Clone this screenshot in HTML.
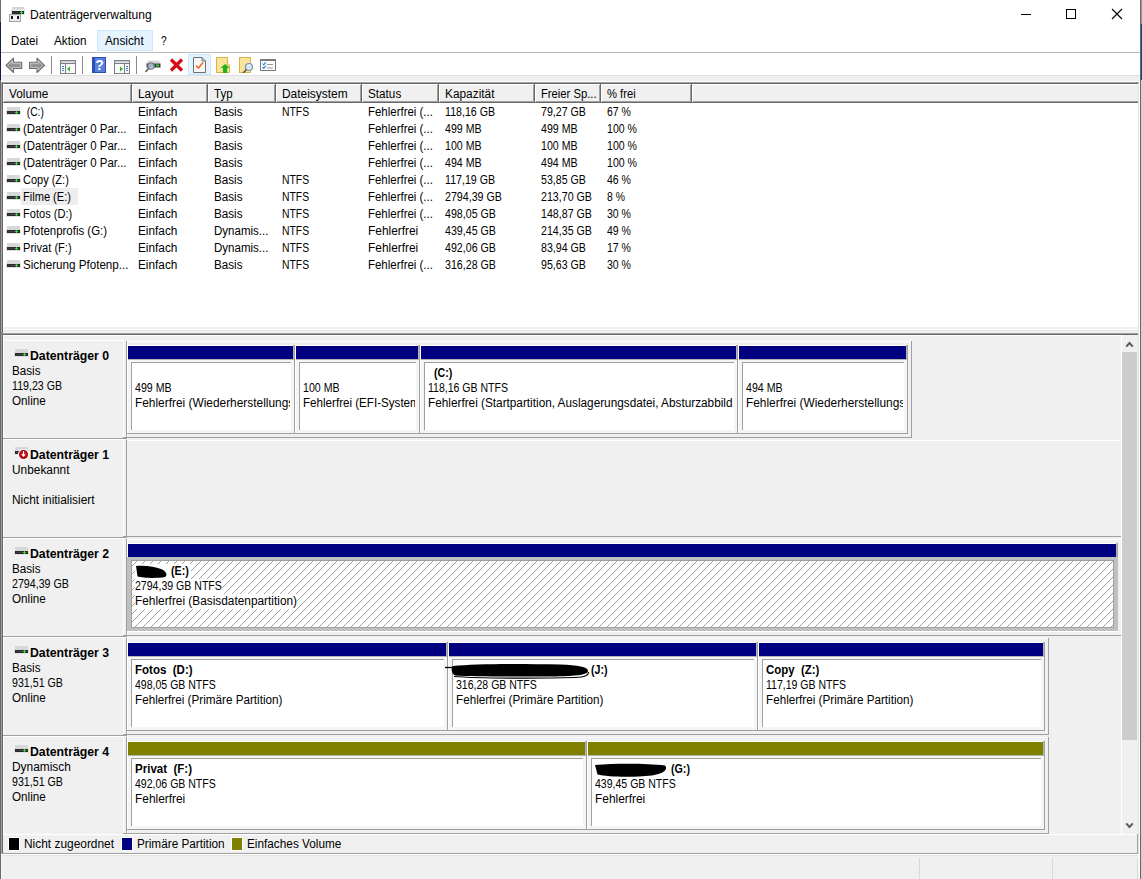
<!DOCTYPE html><html><head><meta charset="utf-8"><style>
html,body{margin:0;padding:0;width:1142px;height:879px;overflow:hidden;background:#fff}
body{position:relative;font-family:"Liberation Sans",sans-serif;font-size:12px}
div{position:absolute;box-sizing:border-box}
.t{white-space:pre;color:#000;font-size:12px}
svg{position:absolute}
</style></head><body>
<div style="left:0px;top:0px;width:1142px;height:879px;background:#ffffff;"></div>
<div style="left:0px;top:0px;width:1px;height:22px;background:#6a6a6a;"></div>
<div style="left:0px;top:22px;width:1px;height:58px;background:#13213f;"></div>
<div style="left:0px;top:80px;width:1px;height:799px;background:#696969;"></div>
<div style="left:1141px;top:0px;width:1px;height:24px;background:#9a9a9a;"></div>
<div style="left:1141px;top:24px;width:1px;height:56px;background:#1d3f73;"></div>
<div style="left:1141px;top:80px;width:1px;height:799px;background:#cfcfcf;"></div>
<div style="left:1140px;top:0px;width:1px;height:879px;background:#696969;"></div>
<svg style="position:absolute;left:9px;top:6px" width="17" height="17" viewBox="0 0 17 17" shape-rendering="crispEdges">
<rect x="3" y="1" width="12" height="4" fill="#d3d5d8"/><rect x="2" y="3" width="14" height="6" fill="#e3e5e7"/><rect x="3" y="5" width="12" height="3" fill="#262626"/><rect x="4" y="6" width="6" height="1" fill="#3a3a3a"/>
<rect x="11" y="6" width="3" height="1" fill="#35e035"/><rect x="12" y="5" width="1" height="3" fill="#35e035"/>
<rect x="0" y="8" width="12" height="8" fill="#a4a4a4"/><rect x="1" y="9" width="10" height="6" fill="#e8e8e8"/><rect x="4" y="10" width="4" height="4" fill="#f6f6f6"/>
<rect x="2" y="10" width="2" height="3" fill="#1c1c1c"/><rect x="8" y="10" width="2" height="3" fill="#1c1c1c"/></svg>
<div class="t" style="left:30px;top:8px;line-height:15px;color:#000;"><span style="display:inline-block;transform:scaleX(1.0024);transform-origin:0 0">Datenträgerverwaltung</span></div>
<div style="left:1021px;top:14px;width:10px;height:1px;background:#000;"></div>
<div style="left:1066px;top:9px;width:10px;height:10px;background:transparent;border:1px solid #000;box-sizing:border-box;"></div>
<svg style="position:absolute;left:1111px;top:8px" width="12" height="12" viewBox="0 0 12 12"><path d="M1 1L11 11M11 1L1 11" stroke="#000" stroke-width="1.1"/></svg>
<div style="left:97px;top:30px;width:56px;height:21px;background:#e5f3ff;border:1px solid #cce8ff;box-sizing:border-box;"></div>
<div class="t" style="left:11px;top:34px;line-height:15px;color:#000;"><span style="display:inline-block;transform:scaleX(0.9669);transform-origin:0 0">Datei</span></div>
<div class="t" style="left:54px;top:34px;line-height:15px;color:#000;"><span style="display:inline-block;transform:scaleX(0.9772);transform-origin:0 0">Aktion</span></div>
<div class="t" style="left:105px;top:34px;line-height:15px;color:#000;"><span style="display:inline-block;transform:scaleX(0.9827);transform-origin:0 0">Ansicht</span></div>
<div class="t" style="left:161px;top:34px;line-height:15px;color:#000;"><span style="display:inline-block;transform:scaleX(0.8440);transform-origin:0 0">?</span></div>
<div style="left:1px;top:52px;width:1139px;height:1px;background:#b9b9b9;"></div>
<div style="left:51px;top:56px;width:1px;height:18px;background:#8c8c8c;"></div>
<div style="left:82px;top:56px;width:1px;height:18px;background:#8c8c8c;"></div>
<div style="left:136px;top:56px;width:1px;height:18px;background:#8c8c8c;"></div>
<svg style="position:absolute;left:5px;top:57px" width="42" height="17" viewBox="0 0 42 17"><defs><linearGradient id="ag" x1="0" y1="0" x2="0" y2="1"><stop offset="0" stop-color="#c4c4c4"/><stop offset="0.55" stop-color="#8c8c8c"/><stop offset="1" stop-color="#bcbcbc"/></linearGradient></defs><g stroke="#6b6b6b" stroke-width="1.1" stroke-linejoin="round" fill="url(#ag)"><path d="M1 8.3L8.5 1.2V5.2H16.7V11.5H8.5V15.5z"/><path d="M39.5 8.3L32 1.2V5.2H24.6V11.5H32V15.5z"/></g><g stroke="#e6e6e6" stroke-width="0.7" fill="none" opacity="0.8"><path d="M2.6 8.3L7.4 3.6V6.3H15.6V10.4H7.4V13.1z"/><path d="M37.9 8.3L33.1 3.6V6.3H25.7V10.4H33.1V13.1z"/></g></svg>
<svg style="position:absolute;left:60px;top:60px" width="16" height="14" viewBox="0 0 16 14"><rect x="0.5" y="0.5" width="15" height="13" fill="#fafafa" stroke="#7a7f86"/><rect x="1" y="1" width="14" height="1.5" fill="#c9ccd1"/><rect x="1" y="3" width="14" height="1" fill="#7a7f86"/><rect x="5" y="4" width="1" height="10" fill="#7a7f86"/><rect x="2" y="6" width="2" height="1" fill="#3a7bd5"/><rect x="2" y="8" width="2" height="1" fill="#3a7bd5"/><rect x="2" y="10" width="2" height="1" fill="#3a7bd5"/><path d="M7 9L10 6.5V11.5z" fill="#2db52d"/></svg>
<svg style="position:absolute;left:92px;top:57px" width="14" height="16" viewBox="0 0 14 16"><rect x="0" y="0" width="14" height="16" fill="#2b4fb8"/><rect x="3" y="1" width="10" height="14" fill="#5b7fdc"/><text x="7.5" y="13" font-family="Liberation Sans" font-weight="bold" font-size="14" fill="#fff" text-anchor="middle">?</text></svg>
<svg style="position:absolute;left:114px;top:60px" width="16" height="14" viewBox="0 0 16 14"><rect x="0.5" y="0.5" width="15" height="13" fill="#fafafa" stroke="#7a7f86"/><rect x="1" y="1" width="14" height="1.5" fill="#c9ccd1"/><rect x="1" y="3" width="14" height="1" fill="#7a7f86"/><rect x="10" y="4" width="1" height="10" fill="#7a7f86"/><rect x="12" y="6" width="2" height="1" fill="#3a7bd5"/><rect x="12" y="8" width="2" height="1" fill="#3a7bd5"/><rect x="12" y="10" width="2" height="1" fill="#3a7bd5"/><path d="M9 9L6 6.5V11.5z" fill="#2db52d"/></svg>
<svg style="position:absolute;left:145px;top:60px" width="16" height="13" viewBox="0 0 16 13"><path d="M3 0.5h11l1.5 3H1.5z" fill="#d5d7d9"/><rect x="1.5" y="3.5" width="14" height="4" fill="#3a3a3a"/><rect x="11" y="4.5" width="3" height="2" fill="#2ecc2e"/><circle cx="6" cy="6" r="3.2" fill="#bcd6ea" fill-opacity="0.8" stroke="#6d7a86" stroke-width="1.2"/><path d="M3.7 8.3L0.5 12" stroke="#555" stroke-width="1.5"/></svg>
<svg style="position:absolute;left:169px;top:58px" width="15" height="14" viewBox="0 0 15 14"><path d="M2 1.5L13 12.5M13 1.5L2 12.5" stroke="#d40b13" stroke-width="3.2"/></svg>
<div style="left:188px;top:54px;width:23px;height:21px;background:#e5f3ff;border:1px solid #cce8ff;"></div>
<svg style="position:absolute;left:193px;top:57px" width="13" height="16" viewBox="0 0 13 16"><path d="M0.5 0.5H9L12.5 4V15.5H0.5z" fill="#f7f7f7" stroke="#6e6e6e"/><path d="M9 0.5V4H12.5" fill="none" stroke="#6e6e6e"/><path d="M3 8.5L5.5 11L10 5.5" stroke="#f06a27" stroke-width="1.6" fill="none"/></svg>
<svg style="position:absolute;left:216px;top:57px" width="14" height="16" viewBox="0 0 14 16"><rect x="0.5" y="0.5" width="11" height="15" fill="#fbe39a" stroke="#d9b54a"/><rect x="11" y="8" width="2.5" height="7.5" fill="#fbe39a" stroke="#d9b54a" stroke-width="1"/><path d="M9 7L13.5 11H11V16H7V11H4.5z" fill="#1fb21f"/></svg>
<svg style="position:absolute;left:239px;top:57px" width="15" height="16" viewBox="0 0 15 16"><rect x="0.5" y="0.5" width="11" height="15" fill="#fbe39a" stroke="#d9b54a"/><circle cx="10" cy="10" r="3.5" fill="#d6e8f5" stroke="#7f96ab" stroke-width="1.2"/><path d="M7.5 12.5L4 16" stroke="#555" stroke-width="1.6"/></svg>
<svg style="position:absolute;left:260px;top:59px" width="16" height="12" viewBox="0 0 16 12"><rect x="0.5" y="0.5" width="15" height="11" fill="#fafafa" stroke="#7a7a7a"/><rect x="1" y="1" width="14" height="1" fill="#7a7a7a"/><path d="M2.5 4.5l1.2 1.3 2-2.5M2.5 8l1.2 1.3 2-2.5" stroke="#2a7fd8" stroke-width="1.1" fill="none"/><rect x="7" y="5" width="6" height="1" fill="#9a9a9a"/><rect x="7" y="8.5" width="6" height="1" fill="#9a9a9a"/></svg>
<div style="left:1px;top:75px;width:1139px;height:1px;background:#e0e0e0;"></div>
<div style="left:1px;top:76px;width:1139px;height:5px;background:#f0f0f0;"></div>
<div style="left:1px;top:81px;width:1139px;height:1px;background:#ffffff;"></div>
<div style="left:1px;top:82px;width:1138px;height:1px;background:#a0a0a0;"></div>
<div style="left:1px;top:82px;width:1px;height:772px;background:#a0a0a0;"></div>
<div style="left:2px;top:83px;width:1136px;height:1px;background:#696969;"></div>
<div style="left:2px;top:83px;width:1px;height:771px;background:#696969;"></div>
<div style="left:1138px;top:83px;width:1px;height:771px;background:#e3e3e3;"></div>
<div style="left:3px;top:84px;width:1135px;height:243px;background:#ffffff;"></div>
<div style="left:3px;top:84px;width:1135px;height:19px;background:#f0f0f0;"></div>
<div style="left:3px;top:84px;width:1135px;height:1px;background:#ffffff;"></div>
<div style="left:3px;top:102px;width:1135px;height:1px;background:#696969;"></div>
<div style="left:3px;top:101px;width:1135px;height:1px;background:#a0a0a0;"></div>
<div style="left:3px;top:84px;width:1px;height:18px;background:#ffffff;"></div>
<div style="left:131px;top:84px;width:1px;height:19px;background:#696969;"></div>
<div style="left:130px;top:85px;width:1px;height:17px;background:#a0a0a0;"></div>
<div class="t" style="left:9px;top:87px;line-height:15px;color:#000;"><span style="display:inline-block;transform:scaleX(0.9837);transform-origin:0 0">Volume</span></div>
<div style="left:132px;top:84px;width:1px;height:18px;background:#ffffff;"></div>
<div style="left:207px;top:84px;width:1px;height:19px;background:#696969;"></div>
<div style="left:206px;top:85px;width:1px;height:17px;background:#a0a0a0;"></div>
<div class="t" style="left:138px;top:87px;line-height:15px;color:#000;"><span style="display:inline-block;transform:scaleX(0.9854);transform-origin:0 0">Layout</span></div>
<div style="left:208px;top:84px;width:1px;height:18px;background:#ffffff;"></div>
<div style="left:275px;top:84px;width:1px;height:19px;background:#696969;"></div>
<div style="left:274px;top:85px;width:1px;height:17px;background:#a0a0a0;"></div>
<div class="t" style="left:214px;top:87px;line-height:15px;color:#000;"><span style="display:inline-block;transform:scaleX(0.9584);transform-origin:0 0">Typ</span></div>
<div style="left:276px;top:84px;width:1px;height:18px;background:#ffffff;"></div>
<div style="left:361px;top:84px;width:1px;height:19px;background:#696969;"></div>
<div style="left:360px;top:85px;width:1px;height:17px;background:#a0a0a0;"></div>
<div class="t" style="left:282px;top:87px;line-height:15px;color:#000;"><span style="display:inline-block;transform:scaleX(0.9934);transform-origin:0 0">Dateisystem</span></div>
<div style="left:362px;top:84px;width:1px;height:18px;background:#ffffff;"></div>
<div style="left:438px;top:84px;width:1px;height:19px;background:#696969;"></div>
<div style="left:437px;top:85px;width:1px;height:17px;background:#a0a0a0;"></div>
<div class="t" style="left:368px;top:87px;line-height:15px;color:#000;"><span style="display:inline-block;transform:scaleX(0.9779);transform-origin:0 0">Status</span></div>
<div style="left:439px;top:84px;width:1px;height:18px;background:#ffffff;"></div>
<div style="left:534px;top:84px;width:1px;height:19px;background:#696969;"></div>
<div style="left:533px;top:85px;width:1px;height:17px;background:#a0a0a0;"></div>
<div class="t" style="left:445px;top:87px;line-height:15px;color:#000;"><span style="display:inline-block;transform:scaleX(0.9892);transform-origin:0 0">Kapazität</span></div>
<div style="left:535px;top:84px;width:1px;height:18px;background:#ffffff;"></div>
<div style="left:600px;top:84px;width:1px;height:19px;background:#696969;"></div>
<div style="left:599px;top:85px;width:1px;height:17px;background:#a0a0a0;"></div>
<div class="t" style="left:541px;top:87px;line-height:15px;color:#000;"><span style="display:inline-block;transform:scaleX(0.9365);transform-origin:0 0">Freier Sp...</span></div>
<div style="left:601px;top:84px;width:1px;height:18px;background:#ffffff;"></div>
<div style="left:691px;top:84px;width:1px;height:19px;background:#696969;"></div>
<div style="left:690px;top:85px;width:1px;height:17px;background:#a0a0a0;"></div>
<div class="t" style="left:607px;top:87px;line-height:15px;color:#000;"><span style="display:inline-block;transform:scaleX(0.9358);transform-origin:0 0">% frei</span></div>
<div style="left:692px;top:84px;width:1px;height:18px;background:#ffffff;"></div>
<div style="left:21px;top:188px;width:57px;height:17px;background:#eeeeee;"></div>
<svg style="position:absolute;left:6px;top:107px" width="15" height="9" viewBox="0 0 15 9"><rect x="0" y="3" width="15" height="5" fill="#dfe1e3"/><rect x="1" y="0" width="13" height="4" fill="#d6d8db"/><rect x="1" y="4" width="13" height="3" fill="#2c2c2c"/><rect x="2" y="5" width="7" height="1" fill="#3c3c3c"/><rect x="9" y="5" width="3" height="1" fill="#30e030"/><rect x="10" y="4" width="1" height="3" fill="#30e030"/></svg>
<div class="t" style="left:24px;top:105px;line-height:15px;color:#000;"><span style="display:inline-block;transform:scaleX(0.8514);transform-origin:0 0"> (C:)</span></div>
<div class="t" style="left:138px;top:105px;line-height:15px;color:#000;"><span style="display:inline-block;transform:scaleX(0.9832);transform-origin:0 0">Einfach</span></div>
<div class="t" style="left:214px;top:105px;line-height:15px;color:#000;"><span style="display:inline-block;transform:scaleX(0.9724);transform-origin:0 0">Basis</span></div>
<div class="t" style="left:282px;top:105px;line-height:15px;color:#000;"><span style="display:inline-block;transform:scaleX(0.8640);transform-origin:0 0">NTFS</span></div>
<div class="t" style="left:368px;top:105px;line-height:15px;color:#000;"><span style="display:inline-block;transform:scaleX(0.9539);transform-origin:0 0">Fehlerfrei (...</span></div>
<div class="t" style="left:445px;top:105px;line-height:15px;color:#000;"><span style="display:inline-block;transform:scaleX(0.8867);transform-origin:0 0">118,16 GB</span></div>
<div class="t" style="left:541px;top:105px;line-height:15px;color:#000;"><span style="display:inline-block;transform:scaleX(0.8840);transform-origin:0 0">79,27 GB</span></div>
<div class="t" style="left:607px;top:105px;line-height:15px;color:#000;"><span style="display:inline-block;transform:scaleX(0.8747);transform-origin:0 0">67 %</span></div>
<svg style="position:absolute;left:6px;top:124px" width="15" height="9" viewBox="0 0 15 9"><rect x="0" y="3" width="15" height="5" fill="#dfe1e3"/><rect x="1" y="0" width="13" height="4" fill="#d6d8db"/><rect x="1" y="4" width="13" height="3" fill="#2c2c2c"/><rect x="2" y="5" width="7" height="1" fill="#3c3c3c"/><rect x="9" y="5" width="3" height="1" fill="#30e030"/><rect x="10" y="4" width="1" height="3" fill="#30e030"/></svg>
<div class="t" style="left:23px;top:122px;line-height:15px;color:#000;"><span style="display:inline-block;transform:scaleX(0.9519);transform-origin:0 0">(Datenträger 0 Par...</span></div>
<div class="t" style="left:138px;top:122px;line-height:15px;color:#000;"><span style="display:inline-block;transform:scaleX(0.9832);transform-origin:0 0">Einfach</span></div>
<div class="t" style="left:214px;top:122px;line-height:15px;color:#000;"><span style="display:inline-block;transform:scaleX(0.9724);transform-origin:0 0">Basis</span></div>
<div class="t" style="left:368px;top:122px;line-height:15px;color:#000;"><span style="display:inline-block;transform:scaleX(0.9539);transform-origin:0 0">Fehlerfrei (...</span></div>
<div class="t" style="left:445px;top:122px;line-height:15px;color:#000;"><span style="display:inline-block;transform:scaleX(0.8832);transform-origin:0 0">499 MB</span></div>
<div class="t" style="left:541px;top:122px;line-height:15px;color:#000;"><span style="display:inline-block;transform:scaleX(0.8832);transform-origin:0 0">499 MB</span></div>
<div class="t" style="left:607px;top:122px;line-height:15px;color:#000;"><span style="display:inline-block;transform:scaleX(0.8811);transform-origin:0 0">100 %</span></div>
<svg style="position:absolute;left:6px;top:141px" width="15" height="9" viewBox="0 0 15 9"><rect x="0" y="3" width="15" height="5" fill="#dfe1e3"/><rect x="1" y="0" width="13" height="4" fill="#d6d8db"/><rect x="1" y="4" width="13" height="3" fill="#2c2c2c"/><rect x="2" y="5" width="7" height="1" fill="#3c3c3c"/><rect x="9" y="5" width="3" height="1" fill="#30e030"/><rect x="10" y="4" width="1" height="3" fill="#30e030"/></svg>
<div class="t" style="left:23px;top:139px;line-height:15px;color:#000;"><span style="display:inline-block;transform:scaleX(0.9519);transform-origin:0 0">(Datenträger 0 Par...</span></div>
<div class="t" style="left:138px;top:139px;line-height:15px;color:#000;"><span style="display:inline-block;transform:scaleX(0.9832);transform-origin:0 0">Einfach</span></div>
<div class="t" style="left:214px;top:139px;line-height:15px;color:#000;"><span style="display:inline-block;transform:scaleX(0.9724);transform-origin:0 0">Basis</span></div>
<div class="t" style="left:368px;top:139px;line-height:15px;color:#000;"><span style="display:inline-block;transform:scaleX(0.9539);transform-origin:0 0">Fehlerfrei (...</span></div>
<div class="t" style="left:445px;top:139px;line-height:15px;color:#000;"><span style="display:inline-block;transform:scaleX(0.8832);transform-origin:0 0">100 MB</span></div>
<div class="t" style="left:541px;top:139px;line-height:15px;color:#000;"><span style="display:inline-block;transform:scaleX(0.8832);transform-origin:0 0">100 MB</span></div>
<div class="t" style="left:607px;top:139px;line-height:15px;color:#000;"><span style="display:inline-block;transform:scaleX(0.8811);transform-origin:0 0">100 %</span></div>
<svg style="position:absolute;left:6px;top:158px" width="15" height="9" viewBox="0 0 15 9"><rect x="0" y="3" width="15" height="5" fill="#dfe1e3"/><rect x="1" y="0" width="13" height="4" fill="#d6d8db"/><rect x="1" y="4" width="13" height="3" fill="#2c2c2c"/><rect x="2" y="5" width="7" height="1" fill="#3c3c3c"/><rect x="9" y="5" width="3" height="1" fill="#30e030"/><rect x="10" y="4" width="1" height="3" fill="#30e030"/></svg>
<div class="t" style="left:23px;top:156px;line-height:15px;color:#000;"><span style="display:inline-block;transform:scaleX(0.9519);transform-origin:0 0">(Datenträger 0 Par...</span></div>
<div class="t" style="left:138px;top:156px;line-height:15px;color:#000;"><span style="display:inline-block;transform:scaleX(0.9832);transform-origin:0 0">Einfach</span></div>
<div class="t" style="left:214px;top:156px;line-height:15px;color:#000;"><span style="display:inline-block;transform:scaleX(0.9724);transform-origin:0 0">Basis</span></div>
<div class="t" style="left:368px;top:156px;line-height:15px;color:#000;"><span style="display:inline-block;transform:scaleX(0.9539);transform-origin:0 0">Fehlerfrei (...</span></div>
<div class="t" style="left:445px;top:156px;line-height:15px;color:#000;"><span style="display:inline-block;transform:scaleX(0.8832);transform-origin:0 0">494 MB</span></div>
<div class="t" style="left:541px;top:156px;line-height:15px;color:#000;"><span style="display:inline-block;transform:scaleX(0.8832);transform-origin:0 0">494 MB</span></div>
<div class="t" style="left:607px;top:156px;line-height:15px;color:#000;"><span style="display:inline-block;transform:scaleX(0.8811);transform-origin:0 0">100 %</span></div>
<svg style="position:absolute;left:6px;top:175px" width="15" height="9" viewBox="0 0 15 9"><rect x="0" y="3" width="15" height="5" fill="#dfe1e3"/><rect x="1" y="0" width="13" height="4" fill="#d6d8db"/><rect x="1" y="4" width="13" height="3" fill="#2c2c2c"/><rect x="2" y="5" width="7" height="1" fill="#3c3c3c"/><rect x="9" y="5" width="3" height="1" fill="#30e030"/><rect x="10" y="4" width="1" height="3" fill="#30e030"/></svg>
<div class="t" style="left:23px;top:173px;line-height:15px;color:#000;"><span style="display:inline-block;transform:scaleX(0.9158);transform-origin:0 0">Copy (Z:)</span></div>
<div class="t" style="left:138px;top:173px;line-height:15px;color:#000;"><span style="display:inline-block;transform:scaleX(0.9832);transform-origin:0 0">Einfach</span></div>
<div class="t" style="left:214px;top:173px;line-height:15px;color:#000;"><span style="display:inline-block;transform:scaleX(0.9724);transform-origin:0 0">Basis</span></div>
<div class="t" style="left:282px;top:173px;line-height:15px;color:#000;"><span style="display:inline-block;transform:scaleX(0.8640);transform-origin:0 0">NTFS</span></div>
<div class="t" style="left:368px;top:173px;line-height:15px;color:#000;"><span style="display:inline-block;transform:scaleX(0.9539);transform-origin:0 0">Fehlerfrei (...</span></div>
<div class="t" style="left:445px;top:173px;line-height:15px;color:#000;"><span style="display:inline-block;transform:scaleX(0.8867);transform-origin:0 0">117,19 GB</span></div>
<div class="t" style="left:541px;top:173px;line-height:15px;color:#000;"><span style="display:inline-block;transform:scaleX(0.8840);transform-origin:0 0">53,85 GB</span></div>
<div class="t" style="left:607px;top:173px;line-height:15px;color:#000;"><span style="display:inline-block;transform:scaleX(0.8747);transform-origin:0 0">46 %</span></div>
<svg style="position:absolute;left:6px;top:192px" width="15" height="9" viewBox="0 0 15 9"><rect x="0" y="3" width="15" height="5" fill="#dfe1e3"/><rect x="1" y="0" width="13" height="4" fill="#d6d8db"/><rect x="1" y="4" width="13" height="3" fill="#2c2c2c"/><rect x="2" y="5" width="7" height="1" fill="#3c3c3c"/><rect x="9" y="5" width="3" height="1" fill="#30e030"/><rect x="10" y="4" width="1" height="3" fill="#30e030"/></svg>
<div class="t" style="left:23px;top:190px;line-height:15px;color:#000;"><span style="display:inline-block;transform:scaleX(0.9214);transform-origin:0 0">Filme (E:)</span></div>
<div class="t" style="left:138px;top:190px;line-height:15px;color:#000;"><span style="display:inline-block;transform:scaleX(0.9832);transform-origin:0 0">Einfach</span></div>
<div class="t" style="left:214px;top:190px;line-height:15px;color:#000;"><span style="display:inline-block;transform:scaleX(0.9724);transform-origin:0 0">Basis</span></div>
<div class="t" style="left:282px;top:190px;line-height:15px;color:#000;"><span style="display:inline-block;transform:scaleX(0.8640);transform-origin:0 0">NTFS</span></div>
<div class="t" style="left:368px;top:190px;line-height:15px;color:#000;"><span style="display:inline-block;transform:scaleX(0.9539);transform-origin:0 0">Fehlerfrei (...</span></div>
<div class="t" style="left:445px;top:190px;line-height:15px;color:#000;"><span style="display:inline-block;transform:scaleX(0.8888);transform-origin:0 0">2794,39 GB</span></div>
<div class="t" style="left:541px;top:190px;line-height:15px;color:#000;"><span style="display:inline-block;transform:scaleX(0.8867);transform-origin:0 0">213,70 GB</span></div>
<div class="t" style="left:607px;top:190px;line-height:15px;color:#000;"><span style="display:inline-block;transform:scaleX(0.8643);transform-origin:0 0">8 %</span></div>
<svg style="position:absolute;left:6px;top:209px" width="15" height="9" viewBox="0 0 15 9"><rect x="0" y="3" width="15" height="5" fill="#dfe1e3"/><rect x="1" y="0" width="13" height="4" fill="#d6d8db"/><rect x="1" y="4" width="13" height="3" fill="#2c2c2c"/><rect x="2" y="5" width="7" height="1" fill="#3c3c3c"/><rect x="9" y="5" width="3" height="1" fill="#30e030"/><rect x="10" y="4" width="1" height="3" fill="#30e030"/></svg>
<div class="t" style="left:23px;top:207px;line-height:15px;color:#000;"><span style="display:inline-block;transform:scaleX(0.9219);transform-origin:0 0">Fotos (D:)</span></div>
<div class="t" style="left:138px;top:207px;line-height:15px;color:#000;"><span style="display:inline-block;transform:scaleX(0.9832);transform-origin:0 0">Einfach</span></div>
<div class="t" style="left:214px;top:207px;line-height:15px;color:#000;"><span style="display:inline-block;transform:scaleX(0.9724);transform-origin:0 0">Basis</span></div>
<div class="t" style="left:282px;top:207px;line-height:15px;color:#000;"><span style="display:inline-block;transform:scaleX(0.8640);transform-origin:0 0">NTFS</span></div>
<div class="t" style="left:368px;top:207px;line-height:15px;color:#000;"><span style="display:inline-block;transform:scaleX(0.9539);transform-origin:0 0">Fehlerfrei (...</span></div>
<div class="t" style="left:445px;top:207px;line-height:15px;color:#000;"><span style="display:inline-block;transform:scaleX(0.8867);transform-origin:0 0">498,05 GB</span></div>
<div class="t" style="left:541px;top:207px;line-height:15px;color:#000;"><span style="display:inline-block;transform:scaleX(0.8867);transform-origin:0 0">148,87 GB</span></div>
<div class="t" style="left:607px;top:207px;line-height:15px;color:#000;"><span style="display:inline-block;transform:scaleX(0.8747);transform-origin:0 0">30 %</span></div>
<svg style="position:absolute;left:6px;top:226px" width="15" height="9" viewBox="0 0 15 9"><rect x="0" y="3" width="15" height="5" fill="#dfe1e3"/><rect x="1" y="0" width="13" height="4" fill="#d6d8db"/><rect x="1" y="4" width="13" height="3" fill="#2c2c2c"/><rect x="2" y="5" width="7" height="1" fill="#3c3c3c"/><rect x="9" y="5" width="3" height="1" fill="#30e030"/><rect x="10" y="4" width="1" height="3" fill="#30e030"/></svg>
<div class="t" style="left:23px;top:224px;line-height:15px;color:#000;"><span style="display:inline-block;transform:scaleX(0.9555);transform-origin:0 0">Pfotenprofis (G:)</span></div>
<div class="t" style="left:138px;top:224px;line-height:15px;color:#000;"><span style="display:inline-block;transform:scaleX(0.9832);transform-origin:0 0">Einfach</span></div>
<div class="t" style="left:214px;top:224px;line-height:15px;color:#000;"><span style="display:inline-block;transform:scaleX(0.9604);transform-origin:0 0">Dynamis...</span></div>
<div class="t" style="left:282px;top:224px;line-height:15px;color:#000;"><span style="display:inline-block;transform:scaleX(0.8640);transform-origin:0 0">NTFS</span></div>
<div class="t" style="left:368px;top:224px;line-height:15px;color:#000;"><span style="display:inline-block;transform:scaleX(0.9915);transform-origin:0 0">Fehlerfrei</span></div>
<div class="t" style="left:445px;top:224px;line-height:15px;color:#000;"><span style="display:inline-block;transform:scaleX(0.8867);transform-origin:0 0">439,45 GB</span></div>
<div class="t" style="left:541px;top:224px;line-height:15px;color:#000;"><span style="display:inline-block;transform:scaleX(0.8867);transform-origin:0 0">214,35 GB</span></div>
<div class="t" style="left:607px;top:224px;line-height:15px;color:#000;"><span style="display:inline-block;transform:scaleX(0.8747);transform-origin:0 0">49 %</span></div>
<svg style="position:absolute;left:6px;top:243px" width="15" height="9" viewBox="0 0 15 9"><rect x="0" y="3" width="15" height="5" fill="#dfe1e3"/><rect x="1" y="0" width="13" height="4" fill="#d6d8db"/><rect x="1" y="4" width="13" height="3" fill="#2c2c2c"/><rect x="2" y="5" width="7" height="1" fill="#3c3c3c"/><rect x="9" y="5" width="3" height="1" fill="#30e030"/><rect x="10" y="4" width="1" height="3" fill="#30e030"/></svg>
<div class="t" style="left:23px;top:241px;line-height:15px;color:#000;"><span style="display:inline-block;transform:scaleX(0.9226);transform-origin:0 0">Privat (F:)</span></div>
<div class="t" style="left:138px;top:241px;line-height:15px;color:#000;"><span style="display:inline-block;transform:scaleX(0.9832);transform-origin:0 0">Einfach</span></div>
<div class="t" style="left:214px;top:241px;line-height:15px;color:#000;"><span style="display:inline-block;transform:scaleX(0.9604);transform-origin:0 0">Dynamis...</span></div>
<div class="t" style="left:282px;top:241px;line-height:15px;color:#000;"><span style="display:inline-block;transform:scaleX(0.8640);transform-origin:0 0">NTFS</span></div>
<div class="t" style="left:368px;top:241px;line-height:15px;color:#000;"><span style="display:inline-block;transform:scaleX(0.9915);transform-origin:0 0">Fehlerfrei</span></div>
<div class="t" style="left:445px;top:241px;line-height:15px;color:#000;"><span style="display:inline-block;transform:scaleX(0.8867);transform-origin:0 0">492,06 GB</span></div>
<div class="t" style="left:541px;top:241px;line-height:15px;color:#000;"><span style="display:inline-block;transform:scaleX(0.8840);transform-origin:0 0">83,94 GB</span></div>
<div class="t" style="left:607px;top:241px;line-height:15px;color:#000;"><span style="display:inline-block;transform:scaleX(0.8747);transform-origin:0 0">17 %</span></div>
<svg style="position:absolute;left:6px;top:260px" width="15" height="9" viewBox="0 0 15 9"><rect x="0" y="3" width="15" height="5" fill="#dfe1e3"/><rect x="1" y="0" width="13" height="4" fill="#d6d8db"/><rect x="1" y="4" width="13" height="3" fill="#2c2c2c"/><rect x="2" y="5" width="7" height="1" fill="#3c3c3c"/><rect x="9" y="5" width="3" height="1" fill="#30e030"/><rect x="10" y="4" width="1" height="3" fill="#30e030"/></svg>
<div class="t" style="left:23px;top:258px;line-height:15px;color:#000;"><span style="display:inline-block;transform:scaleX(0.9703);transform-origin:0 0">Sicherung Pfotenp...</span></div>
<div class="t" style="left:138px;top:258px;line-height:15px;color:#000;"><span style="display:inline-block;transform:scaleX(0.9832);transform-origin:0 0">Einfach</span></div>
<div class="t" style="left:214px;top:258px;line-height:15px;color:#000;"><span style="display:inline-block;transform:scaleX(0.9724);transform-origin:0 0">Basis</span></div>
<div class="t" style="left:282px;top:258px;line-height:15px;color:#000;"><span style="display:inline-block;transform:scaleX(0.8640);transform-origin:0 0">NTFS</span></div>
<div class="t" style="left:368px;top:258px;line-height:15px;color:#000;"><span style="display:inline-block;transform:scaleX(0.9539);transform-origin:0 0">Fehlerfrei (...</span></div>
<div class="t" style="left:445px;top:258px;line-height:15px;color:#000;"><span style="display:inline-block;transform:scaleX(0.8867);transform-origin:0 0">316,28 GB</span></div>
<div class="t" style="left:541px;top:258px;line-height:15px;color:#000;"><span style="display:inline-block;transform:scaleX(0.8840);transform-origin:0 0">95,63 GB</span></div>
<div class="t" style="left:607px;top:258px;line-height:15px;color:#000;"><span style="display:inline-block;transform:scaleX(0.8747);transform-origin:0 0">30 %</span></div>
<div style="left:3px;top:327px;width:1135px;height:2px;background:#f0f0f0;"></div>
<div style="left:3px;top:329px;width:1135px;height:1px;background:#ffffff;"></div>
<div style="left:3px;top:330px;width:1135px;height:3px;background:#f0f0f0;"></div>
<div style="left:3px;top:330px;width:1135px;height:1px;background:#e8e8e8;"></div>
<div style="left:2px;top:333px;width:1136px;height:1px;background:#a0a0a0;"></div>
<div style="left:2px;top:334px;width:1136px;height:1px;background:#696969;"></div>
<div style="left:1px;top:333px;width:1px;height:1px;background:#696969;"></div>
<div style="left:3px;top:335px;width:1118px;height:499px;background:#f0f0f0;"></div>
<div style="left:3px;top:335px;width:1118px;height:1px;background:#ffffff;"></div>
<div style="left:3px;top:335px;width:1px;height:499px;background:#ffffff;"></div>
<div style="left:3px;top:340px;width:121px;height:1px;background:#ffffff;"></div>
<div style="left:3px;top:340px;width:1px;height:98px;background:#ffffff;"></div>
<div style="left:123px;top:341px;width:1px;height:97px;background:#ffffff;"></div>
<div style="left:3px;top:438px;width:124px;height:1px;background:#a0a0a0;"></div>
<div style="left:126px;top:341px;width:1px;height:97px;background:#a0a0a0;"></div>
<svg style="position:absolute;left:14px;top:349px" width="15" height="9" viewBox="0 0 15 9"><rect x="0" y="3" width="15" height="5" fill="#dfe1e3"/><rect x="1" y="0" width="13" height="4" fill="#d6d8db"/><rect x="1" y="4" width="13" height="3" fill="#2c2c2c"/><rect x="2" y="5" width="7" height="1" fill="#3c3c3c"/><rect x="9" y="5" width="3" height="1" fill="#30e030"/><rect x="10" y="4" width="1" height="3" fill="#30e030"/></svg>
<div class="t" style="left:30px;top:349px;line-height:15px;font-weight:bold;color:#000;"><span style="display:inline-block;transform:scaleX(1.0220);transform-origin:0 0">Datenträger 0</span></div>
<div class="t" style="left:12px;top:364px;line-height:15px;color:#000;"><span style="display:inline-block;transform:scaleX(0.9724);transform-origin:0 0">Basis</span></div>
<div class="t" style="left:12px;top:379px;line-height:15px;color:#000;"><span style="display:inline-block;transform:scaleX(0.8867);transform-origin:0 0">119,23 GB</span></div>
<div class="t" style="left:12px;top:394px;line-height:15px;color:#000;"><span style="display:inline-block;transform:scaleX(0.9729);transform-origin:0 0">Online</span></div>
<div style="left:127px;top:341px;width:784px;height:1px;background:#ffffff;"></div>
<div style="left:123px;top:437px;width:788px;height:1px;background:#a0a0a0;"></div>
<div style="left:911px;top:341px;width:1px;height:97px;background:#a0a0a0;"></div>
<div style="left:127px;top:341px;width:1px;height:96px;background:#ffffff;"></div>
<div style="left:128px;top:360px;width:166px;height:73px;background:#f5f5f5;"></div>
<div style="left:127px;top:433px;width:168px;height:1px;background:#a0a0a0;"></div>
<div style="left:294px;top:345px;width:1px;height:89px;background:#a0a0a0;"></div>
<div style="left:127px;top:345px;width:167px;height:1px;background:#ffffff;"></div>
<div style="left:127px;top:345px;width:1px;height:88px;background:#ffffff;"></div>
<div style="left:128px;top:346px;width:165px;height:13px;background:#000080;"></div>
<div style="left:293px;top:345px;width:1px;height:14px;background:#b4b4b0;"></div>
<div style="left:128px;top:359px;width:166px;height:1px;background:#b4b4b0;"></div>
<div style="left:131px;top:362px;width:160px;height:68px;background:#ffffff;border-top:1px solid #a0a0a0;border-left:1px solid #a0a0a0;"></div>
<div class="t" style="left:135px;top:381px;line-height:15px;color:#000;width:155px;height:15px;overflow:hidden;"><span style="display:inline-block;transform:scaleX(0.8832);transform-origin:0 0">499 MB</span></div>
<div class="t" style="left:135px;top:396px;line-height:15px;color:#000;width:155px;height:15px;overflow:hidden;"><span style="display:inline-block;transform:scaleX(0.9904);transform-origin:0 0">Fehlerfrei (Wiederherstellungspartition)</span></div>
<div style="left:296px;top:360px;width:123px;height:73px;background:#f5f5f5;"></div>
<div style="left:295px;top:433px;width:125px;height:1px;background:#a0a0a0;"></div>
<div style="left:419px;top:345px;width:1px;height:89px;background:#a0a0a0;"></div>
<div style="left:295px;top:345px;width:124px;height:1px;background:#ffffff;"></div>
<div style="left:295px;top:345px;width:1px;height:88px;background:#ffffff;"></div>
<div style="left:296px;top:346px;width:122px;height:13px;background:#000080;"></div>
<div style="left:418px;top:345px;width:1px;height:14px;background:#b4b4b0;"></div>
<div style="left:296px;top:359px;width:123px;height:1px;background:#b4b4b0;"></div>
<div style="left:299px;top:362px;width:117px;height:68px;background:#ffffff;border-top:1px solid #a0a0a0;border-left:1px solid #a0a0a0;"></div>
<div class="t" style="left:303px;top:381px;line-height:15px;color:#000;width:112px;height:15px;overflow:hidden;"><span style="display:inline-block;transform:scaleX(0.8832);transform-origin:0 0">100 MB</span></div>
<div class="t" style="left:303px;top:396px;line-height:15px;color:#000;width:112px;height:15px;overflow:hidden;"><span style="display:inline-block;transform:scaleX(0.9673);transform-origin:0 0">Fehlerfrei (EFI-Systempartition)</span></div>
<div style="left:421px;top:360px;width:316px;height:73px;background:#f5f5f5;"></div>
<div style="left:420px;top:433px;width:318px;height:1px;background:#a0a0a0;"></div>
<div style="left:737px;top:345px;width:1px;height:89px;background:#a0a0a0;"></div>
<div style="left:420px;top:345px;width:317px;height:1px;background:#ffffff;"></div>
<div style="left:420px;top:345px;width:1px;height:88px;background:#ffffff;"></div>
<div style="left:421px;top:346px;width:315px;height:13px;background:#000080;"></div>
<div style="left:736px;top:345px;width:1px;height:14px;background:#b4b4b0;"></div>
<div style="left:421px;top:359px;width:316px;height:1px;background:#b4b4b0;"></div>
<div style="left:424px;top:362px;width:310px;height:68px;background:#ffffff;border-top:1px solid #a0a0a0;border-left:1px solid #a0a0a0;"></div>
<div class="t" style="left:428px;top:366px;line-height:15px;font-weight:bold;color:#000;width:305px;height:15px;overflow:hidden;"><span style="display:inline-block;transform:scaleX(0.8869);transform-origin:0 0">  (C:)</span></div>
<div class="t" style="left:428px;top:381px;line-height:15px;color:#000;width:305px;height:15px;overflow:hidden;"><span style="display:inline-block;transform:scaleX(0.8774);transform-origin:0 0">118,16 GB NTFS</span></div>
<div class="t" style="left:428px;top:396px;line-height:15px;color:#000;width:305px;height:15px;overflow:hidden;"><span style="display:inline-block;transform:scaleX(0.9816);transform-origin:0 0">Fehlerfrei (Startpartition, Auslagerungsdatei, Absturzabbild, Primäre Partition)</span></div>
<div style="left:739px;top:360px;width:168px;height:73px;background:#f5f5f5;"></div>
<div style="left:738px;top:433px;width:170px;height:1px;background:#a0a0a0;"></div>
<div style="left:907px;top:345px;width:1px;height:89px;background:#a0a0a0;"></div>
<div style="left:738px;top:345px;width:169px;height:1px;background:#ffffff;"></div>
<div style="left:738px;top:345px;width:1px;height:88px;background:#ffffff;"></div>
<div style="left:739px;top:346px;width:167px;height:13px;background:#000080;"></div>
<div style="left:906px;top:345px;width:1px;height:14px;background:#b4b4b0;"></div>
<div style="left:739px;top:359px;width:168px;height:1px;background:#b4b4b0;"></div>
<div style="left:742px;top:362px;width:162px;height:68px;background:#ffffff;border-top:1px solid #a0a0a0;border-left:1px solid #a0a0a0;"></div>
<div class="t" style="left:746px;top:381px;line-height:15px;color:#000;width:157px;height:15px;overflow:hidden;"><span style="display:inline-block;transform:scaleX(0.8832);transform-origin:0 0">494 MB</span></div>
<div class="t" style="left:746px;top:396px;line-height:15px;color:#000;width:157px;height:15px;overflow:hidden;"><span style="display:inline-block;transform:scaleX(0.9904);transform-origin:0 0">Fehlerfrei (Wiederherstellungspartition)</span></div>
<div style="left:3px;top:439px;width:121px;height:1px;background:#ffffff;"></div>
<div style="left:3px;top:439px;width:1px;height:98px;background:#ffffff;"></div>
<div style="left:123px;top:440px;width:1px;height:97px;background:#ffffff;"></div>
<div style="left:3px;top:537px;width:124px;height:1px;background:#a0a0a0;"></div>
<div style="left:126px;top:440px;width:1px;height:97px;background:#a0a0a0;"></div>
<svg style="position:absolute;left:14px;top:447px" width="15" height="9" viewBox="0 0 15 9"><rect x="0" y="3" width="15" height="5" fill="#dfe1e3"/><rect x="1" y="0" width="13" height="4" fill="#d6d8db"/><rect x="1" y="4" width="13" height="3" fill="#2c2c2c"/><rect x="2" y="5" width="7" height="1" fill="#3c3c3c"/><rect x="9" y="5" width="3" height="1" fill="#30e030"/><rect x="10" y="4" width="1" height="3" fill="#30e030"/></svg>
<svg style="position:absolute;left:17px;top:448px" width="13" height="13" viewBox="0 0 13 13"><circle cx="6.5" cy="6.5" r="5.5" fill="#fff"/><circle cx="6.5" cy="6.5" r="4.4" fill="#d0101c"/><circle cx="6.5" cy="6.5" r="4.0" fill="none" stroke="#8a0010" stroke-width="0.9"/><path d="M6.5 3.2v4.5" stroke="#fff" stroke-width="1.2"/><path d="M4.2 6.2L6.5 8.9L8.8 6.2z" fill="#fff"/></svg>
<div class="t" style="left:30px;top:448px;line-height:15px;font-weight:bold;color:#000;"><span style="display:inline-block;transform:scaleX(1.0220);transform-origin:0 0">Datenträger 1</span></div>
<div class="t" style="left:12px;top:463px;line-height:15px;color:#000;"><span style="display:inline-block;transform:scaleX(0.9908);transform-origin:0 0">Unbekannt</span></div>
<div class="t" style="left:12px;top:493px;line-height:15px;color:#000;"><span style="display:inline-block;transform:scaleX(0.9907);transform-origin:0 0">Nicht initialisiert</span></div>
<div style="left:127px;top:440px;width:994px;height:1px;background:#ffffff;"></div>
<div style="left:123px;top:536px;width:998px;height:1px;background:#a0a0a0;"></div>
<div style="left:3px;top:538px;width:121px;height:1px;background:#ffffff;"></div>
<div style="left:3px;top:538px;width:1px;height:98px;background:#ffffff;"></div>
<div style="left:123px;top:539px;width:1px;height:97px;background:#ffffff;"></div>
<div style="left:3px;top:636px;width:124px;height:1px;background:#a0a0a0;"></div>
<div style="left:126px;top:539px;width:1px;height:97px;background:#a0a0a0;"></div>
<svg style="position:absolute;left:14px;top:547px" width="15" height="9" viewBox="0 0 15 9"><rect x="0" y="3" width="15" height="5" fill="#dfe1e3"/><rect x="1" y="0" width="13" height="4" fill="#d6d8db"/><rect x="1" y="4" width="13" height="3" fill="#2c2c2c"/><rect x="2" y="5" width="7" height="1" fill="#3c3c3c"/><rect x="9" y="5" width="3" height="1" fill="#30e030"/><rect x="10" y="4" width="1" height="3" fill="#30e030"/></svg>
<div class="t" style="left:30px;top:547px;line-height:15px;font-weight:bold;color:#000;"><span style="display:inline-block;transform:scaleX(1.0220);transform-origin:0 0">Datenträger 2</span></div>
<div class="t" style="left:12px;top:562px;line-height:15px;color:#000;"><span style="display:inline-block;transform:scaleX(0.9724);transform-origin:0 0">Basis</span></div>
<div class="t" style="left:12px;top:577px;line-height:15px;color:#000;"><span style="display:inline-block;transform:scaleX(0.8888);transform-origin:0 0">2794,39 GB</span></div>
<div class="t" style="left:12px;top:592px;line-height:15px;color:#000;"><span style="display:inline-block;transform:scaleX(0.9729);transform-origin:0 0">Online</span></div>
<div style="left:127px;top:539px;width:994px;height:1px;background:#ffffff;"></div>
<div style="left:123px;top:635px;width:998px;height:1px;background:#a0a0a0;"></div>
<div style="left:127px;top:539px;width:1px;height:96px;background:#ffffff;"></div>
<div style="left:127px;top:557px;width:991px;height:74px;background:#c0c0c0;"></div>
<div style="left:127px;top:631px;width:991px;height:1px;background:#ffffff;"></div>
<div style="left:127px;top:543px;width:990px;height:1px;background:#ffffff;"></div>
<div style="left:127px;top:543px;width:1px;height:14px;background:#ffffff;"></div>
<div style="left:128px;top:544px;width:988px;height:13px;background:#000080;"></div>
<div style="left:1116px;top:543px;width:1px;height:14px;background:#b4b4b0;"></div>
<div style="left:128px;top:557px;width:989px;height:1px;background:#c0c0c0;"></div>
<div style="left:1117px;top:543px;width:1px;height:14px;background:#a0a0a0;"></div>
<div style="left:131px;top:560px;width:983px;height:68px;background:#ffffff;border:1px solid #a0a0a0;"></div>
<svg style="position:absolute;left:132px;top:561px" width="981" height="66" shape-rendering="crispEdges"><defs><pattern id="h" width="8" height="8" patternUnits="userSpaceOnUse"><g fill="#a0a0a0"><rect x="0" y="4" width="1" height="1"/><rect x="1" y="3" width="1" height="1"/><rect x="2" y="2" width="1" height="1"/><rect x="3" y="1" width="1" height="1"/><rect x="4" y="0" width="1" height="1"/><rect x="5" y="7" width="1" height="1"/><rect x="6" y="6" width="1" height="1"/><rect x="7" y="5" width="1" height="1"/></g></pattern></defs><rect width="981" height="66" fill="url(#h)"/></svg>
<div class="t" style="left:135px;top:579px;line-height:15px;color:#000;width:978px;height:15px;overflow:hidden;"><span style="display:inline-block;background:#fff;transform:scaleX(0.8794);transform-origin:0 0">2794,39 GB NTFS</span></div>
<div class="t" style="left:135px;top:594px;line-height:15px;color:#000;width:978px;height:15px;overflow:hidden;"><span style="display:inline-block;background:#fff;transform:scaleX(0.9874);transform-origin:0 0">Fehlerfrei (Basisdatenpartition)</span></div>
<div style="left:3px;top:637px;width:121px;height:1px;background:#ffffff;"></div>
<div style="left:3px;top:637px;width:1px;height:98px;background:#ffffff;"></div>
<div style="left:123px;top:638px;width:1px;height:97px;background:#ffffff;"></div>
<div style="left:3px;top:735px;width:124px;height:1px;background:#a0a0a0;"></div>
<div style="left:126px;top:638px;width:1px;height:97px;background:#a0a0a0;"></div>
<svg style="position:absolute;left:14px;top:646px" width="15" height="9" viewBox="0 0 15 9"><rect x="0" y="3" width="15" height="5" fill="#dfe1e3"/><rect x="1" y="0" width="13" height="4" fill="#d6d8db"/><rect x="1" y="4" width="13" height="3" fill="#2c2c2c"/><rect x="2" y="5" width="7" height="1" fill="#3c3c3c"/><rect x="9" y="5" width="3" height="1" fill="#30e030"/><rect x="10" y="4" width="1" height="3" fill="#30e030"/></svg>
<div class="t" style="left:30px;top:646px;line-height:15px;font-weight:bold;color:#000;"><span style="display:inline-block;transform:scaleX(1.0220);transform-origin:0 0">Datenträger 3</span></div>
<div class="t" style="left:12px;top:661px;line-height:15px;color:#000;"><span style="display:inline-block;transform:scaleX(0.9724);transform-origin:0 0">Basis</span></div>
<div class="t" style="left:12px;top:676px;line-height:15px;color:#000;"><span style="display:inline-block;transform:scaleX(0.8867);transform-origin:0 0">931,51 GB</span></div>
<div class="t" style="left:12px;top:691px;line-height:15px;color:#000;"><span style="display:inline-block;transform:scaleX(0.9729);transform-origin:0 0">Online</span></div>
<div style="left:127px;top:638px;width:921px;height:1px;background:#ffffff;"></div>
<div style="left:123px;top:734px;width:925px;height:1px;background:#a0a0a0;"></div>
<div style="left:1048px;top:638px;width:1px;height:97px;background:#a0a0a0;"></div>
<div style="left:127px;top:638px;width:1px;height:96px;background:#ffffff;"></div>
<div style="left:128px;top:657px;width:319px;height:73px;background:#f5f5f5;"></div>
<div style="left:127px;top:730px;width:321px;height:1px;background:#a0a0a0;"></div>
<div style="left:447px;top:642px;width:1px;height:89px;background:#a0a0a0;"></div>
<div style="left:127px;top:642px;width:320px;height:1px;background:#ffffff;"></div>
<div style="left:127px;top:642px;width:1px;height:88px;background:#ffffff;"></div>
<div style="left:128px;top:643px;width:318px;height:13px;background:#000080;"></div>
<div style="left:446px;top:642px;width:1px;height:14px;background:#b4b4b0;"></div>
<div style="left:128px;top:656px;width:319px;height:1px;background:#b4b4b0;"></div>
<div style="left:131px;top:659px;width:313px;height:68px;background:#ffffff;border-top:1px solid #a0a0a0;border-left:1px solid #a0a0a0;"></div>
<div class="t" style="left:135px;top:663px;line-height:15px;font-weight:bold;color:#000;width:308px;height:15px;overflow:hidden;"><span style="display:inline-block;transform:scaleX(0.9603);transform-origin:0 0">Fotos  (D:)</span></div>
<div class="t" style="left:135px;top:678px;line-height:15px;color:#000;width:308px;height:15px;overflow:hidden;"><span style="display:inline-block;transform:scaleX(0.8774);transform-origin:0 0">498,05 GB NTFS</span></div>
<div class="t" style="left:135px;top:693px;line-height:15px;color:#000;width:308px;height:15px;overflow:hidden;"><span style="display:inline-block;transform:scaleX(0.9737);transform-origin:0 0">Fehlerfrei (Primäre Partition)</span></div>
<div style="left:449px;top:657px;width:308px;height:73px;background:#f5f5f5;"></div>
<div style="left:448px;top:730px;width:310px;height:1px;background:#a0a0a0;"></div>
<div style="left:757px;top:642px;width:1px;height:89px;background:#a0a0a0;"></div>
<div style="left:448px;top:642px;width:309px;height:1px;background:#ffffff;"></div>
<div style="left:448px;top:642px;width:1px;height:88px;background:#ffffff;"></div>
<div style="left:449px;top:643px;width:307px;height:13px;background:#000080;"></div>
<div style="left:756px;top:642px;width:1px;height:14px;background:#b4b4b0;"></div>
<div style="left:449px;top:656px;width:308px;height:1px;background:#b4b4b0;"></div>
<div style="left:452px;top:659px;width:302px;height:68px;background:#ffffff;border-top:1px solid #a0a0a0;border-left:1px solid #a0a0a0;"></div>
<div class="t" style="left:456px;top:678px;line-height:15px;color:#000;width:297px;height:15px;overflow:hidden;"><span style="display:inline-block;transform:scaleX(0.8774);transform-origin:0 0">316,28 GB NTFS</span></div>
<div class="t" style="left:456px;top:693px;line-height:15px;color:#000;width:297px;height:15px;overflow:hidden;"><span style="display:inline-block;transform:scaleX(0.9737);transform-origin:0 0">Fehlerfrei (Primäre Partition)</span></div>
<div style="left:759px;top:657px;width:285px;height:73px;background:#f5f5f5;"></div>
<div style="left:758px;top:730px;width:287px;height:1px;background:#a0a0a0;"></div>
<div style="left:1044px;top:642px;width:1px;height:89px;background:#a0a0a0;"></div>
<div style="left:758px;top:642px;width:286px;height:1px;background:#ffffff;"></div>
<div style="left:758px;top:642px;width:1px;height:88px;background:#ffffff;"></div>
<div style="left:759px;top:643px;width:284px;height:13px;background:#000080;"></div>
<div style="left:1043px;top:642px;width:1px;height:14px;background:#b4b4b0;"></div>
<div style="left:759px;top:656px;width:285px;height:1px;background:#b4b4b0;"></div>
<div style="left:762px;top:659px;width:279px;height:68px;background:#ffffff;border-top:1px solid #a0a0a0;border-left:1px solid #a0a0a0;"></div>
<div class="t" style="left:766px;top:663px;line-height:15px;font-weight:bold;color:#000;width:274px;height:15px;overflow:hidden;"><span style="display:inline-block;transform:scaleX(0.9534);transform-origin:0 0">Copy  (Z:)</span></div>
<div class="t" style="left:766px;top:678px;line-height:15px;color:#000;width:274px;height:15px;overflow:hidden;"><span style="display:inline-block;transform:scaleX(0.8774);transform-origin:0 0">117,19 GB NTFS</span></div>
<div class="t" style="left:766px;top:693px;line-height:15px;color:#000;width:274px;height:15px;overflow:hidden;"><span style="display:inline-block;transform:scaleX(0.9737);transform-origin:0 0">Fehlerfrei (Primäre Partition)</span></div>
<div style="left:3px;top:736px;width:121px;height:1px;background:#ffffff;"></div>
<div style="left:3px;top:736px;width:1px;height:98px;background:#ffffff;"></div>
<div style="left:123px;top:737px;width:1px;height:97px;background:#ffffff;"></div>
<div style="left:3px;top:834px;width:124px;height:1px;background:#a0a0a0;"></div>
<div style="left:126px;top:737px;width:1px;height:97px;background:#a0a0a0;"></div>
<svg style="position:absolute;left:14px;top:745px" width="15" height="9" viewBox="0 0 15 9"><rect x="0" y="3" width="15" height="5" fill="#dfe1e3"/><rect x="1" y="0" width="13" height="4" fill="#d6d8db"/><rect x="1" y="4" width="13" height="3" fill="#2c2c2c"/><rect x="2" y="5" width="7" height="1" fill="#3c3c3c"/><rect x="9" y="5" width="3" height="1" fill="#30e030"/><rect x="10" y="4" width="1" height="3" fill="#30e030"/></svg>
<div class="t" style="left:30px;top:745px;line-height:15px;font-weight:bold;color:#000;"><span style="display:inline-block;transform:scaleX(1.0220);transform-origin:0 0">Datenträger 4</span></div>
<div class="t" style="left:12px;top:760px;line-height:15px;color:#000;"><span style="display:inline-block;transform:scaleX(0.9912);transform-origin:0 0">Dynamisch</span></div>
<div class="t" style="left:12px;top:775px;line-height:15px;color:#000;"><span style="display:inline-block;transform:scaleX(0.8867);transform-origin:0 0">931,51 GB</span></div>
<div class="t" style="left:12px;top:790px;line-height:15px;color:#000;"><span style="display:inline-block;transform:scaleX(0.9729);transform-origin:0 0">Online</span></div>
<div style="left:127px;top:737px;width:921px;height:1px;background:#ffffff;"></div>
<div style="left:123px;top:833px;width:925px;height:1px;background:#a0a0a0;"></div>
<div style="left:1048px;top:737px;width:1px;height:97px;background:#a0a0a0;"></div>
<div style="left:127px;top:737px;width:1px;height:96px;background:#ffffff;"></div>
<div style="left:128px;top:756px;width:458px;height:73px;background:#f5f5f5;"></div>
<div style="left:127px;top:829px;width:460px;height:1px;background:#a0a0a0;"></div>
<div style="left:586px;top:741px;width:1px;height:89px;background:#a0a0a0;"></div>
<div style="left:127px;top:741px;width:459px;height:1px;background:#ffffff;"></div>
<div style="left:127px;top:741px;width:1px;height:88px;background:#ffffff;"></div>
<div style="left:128px;top:742px;width:457px;height:13px;background:#808000;"></div>
<div style="left:585px;top:741px;width:1px;height:14px;background:#b4b4b0;"></div>
<div style="left:128px;top:755px;width:458px;height:1px;background:#b4b4b0;"></div>
<div style="left:131px;top:758px;width:452px;height:68px;background:#ffffff;border-top:1px solid #a0a0a0;border-left:1px solid #a0a0a0;"></div>
<div class="t" style="left:135px;top:762px;line-height:15px;font-weight:bold;color:#000;width:447px;height:15px;overflow:hidden;"><span style="display:inline-block;transform:scaleX(0.9610);transform-origin:0 0">Privat  (F:)</span></div>
<div class="t" style="left:135px;top:777px;line-height:15px;color:#000;width:447px;height:15px;overflow:hidden;"><span style="display:inline-block;transform:scaleX(0.8774);transform-origin:0 0">492,06 GB NTFS</span></div>
<div class="t" style="left:135px;top:792px;line-height:15px;color:#000;width:447px;height:15px;overflow:hidden;"><span style="display:inline-block;transform:scaleX(0.9915);transform-origin:0 0">Fehlerfrei</span></div>
<div style="left:588px;top:756px;width:456px;height:73px;background:#f5f5f5;"></div>
<div style="left:587px;top:829px;width:458px;height:1px;background:#a0a0a0;"></div>
<div style="left:1044px;top:741px;width:1px;height:89px;background:#a0a0a0;"></div>
<div style="left:587px;top:741px;width:457px;height:1px;background:#ffffff;"></div>
<div style="left:587px;top:741px;width:1px;height:88px;background:#ffffff;"></div>
<div style="left:588px;top:742px;width:455px;height:13px;background:#808000;"></div>
<div style="left:1043px;top:741px;width:1px;height:14px;background:#b4b4b0;"></div>
<div style="left:588px;top:755px;width:456px;height:1px;background:#b4b4b0;"></div>
<div style="left:591px;top:758px;width:450px;height:68px;background:#ffffff;border-top:1px solid #a0a0a0;border-left:1px solid #a0a0a0;"></div>
<div class="t" style="left:595px;top:777px;line-height:15px;color:#000;width:445px;height:15px;overflow:hidden;"><span style="display:inline-block;transform:scaleX(0.8774);transform-origin:0 0">439,45 GB NTFS</span></div>
<div class="t" style="left:595px;top:792px;line-height:15px;color:#000;width:445px;height:15px;overflow:hidden;"><span style="display:inline-block;transform:scaleX(0.9915);transform-origin:0 0">Fehlerfrei</span></div>
<div style="left:135px;top:564px;width:56px;height:15px;background:#ffffff;"></div>
<div class="t" style="left:171px;top:564px;line-height:15px;font-weight:bold;color:#000;"><span style="display:inline-block;transform:scaleX(0.8886);transform-origin:0 0">(E:)</span></div>
<div class="t" style="left:591px;top:663px;line-height:15px;font-weight:bold;color:#000;"><span style="display:inline-block;transform:scaleX(0.8878);transform-origin:0 0">(J:)</span></div>
<div class="t" style="left:671px;top:762px;line-height:15px;font-weight:bold;color:#000;"><span style="display:inline-block;transform:scaleX(0.8894);transform-origin:0 0">(G:)</span></div>
<svg style="position:absolute;left:0;top:0" width="1142" height="879" viewBox="0 0 1142 879"><path d="M136 566 C146 565 155 567 161 569 C166 571 168 575 165 577 C157 578.5 143 578 137.5 576.5 Z" fill="#000"/><path d="M453 666 C475 663.5 520 663.5 560 664.5 C578 665 588 667 588 671 C588 675 575 676.5 545 676.5 C505 676.5 470 676.5 455 675.5 C451 673 451 668 453 666 Z" fill="#000"/><path d="M454 676.5 C480 678.5 540 678.5 575 677.5 C585 677 589 675 588.5 672" stroke="#000" stroke-width="1.2" fill="none"/><path d="M445 667.5 L458 667.5" stroke="#000" stroke-width="1.3"/><path d="M595 765 C618 763 648 763.5 665 765.5 C668 769 665 773 652 775.5 C632 777.5 608 777 597.5 774.5 Z" fill="#000"/></svg>
<div style="left:1121px;top:335px;width:1px;height:499px;background:#ffffff;"></div>
<div style="left:1122px;top:335px;width:16px;height:499px;background:#f0f0f0;"></div>
<div style="left:1122px;top:352px;width:15px;height:388px;background:#cdcdcd;"></div>
<svg style="position:absolute;left:1124px;top:340px" width="11" height="8" viewBox="0 0 11 8"><path d="M2.2 6.6L5.5 3L8.8 6.6" stroke="#5a5a5a" stroke-width="1.9" fill="none"/></svg>
<svg style="position:absolute;left:1124px;top:822px" width="11" height="8" viewBox="0 0 11 8"><path d="M2.2 1.4L5.5 5L8.8 1.4" stroke="#5a5a5a" stroke-width="1.9" fill="none"/></svg>
<div style="left:3px;top:834px;width:1134px;height:1px;background:#ffffff;"></div>
<div style="left:3px;top:835px;width:1134px;height:18px;background:#f0f0f0;"></div>
<div style="left:2px;top:853px;width:1136px;height:1px;background:#a0a0a0;"></div>
<div style="left:1137px;top:834px;width:1px;height:19px;background:#a0a0a0;"></div>
<div style="left:8px;top:837px;width:12px;height:14px;background:#ffffff;"></div>
<div style="left:9px;top:838px;width:10px;height:12px;background:#000000;"></div>
<div class="t" style="left:24px;top:837px;line-height:15px;color:#000;"><span style="display:inline-block;transform:scaleX(0.9926);transform-origin:0 0">Nicht zugeordnet</span></div>
<div style="left:121px;top:837px;width:12px;height:14px;background:#ffffff;"></div>
<div style="left:122px;top:838px;width:10px;height:12px;background:#000080;"></div>
<div class="t" style="left:137px;top:837px;line-height:15px;color:#000;"><span style="display:inline-block;transform:scaleX(0.9800);transform-origin:0 0">Primäre Partition</span></div>
<div style="left:231px;top:837px;width:12px;height:14px;background:#ffffff;"></div>
<div style="left:232px;top:838px;width:10px;height:12px;background:#808000;"></div>
<div class="t" style="left:247px;top:837px;line-height:15px;color:#000;"><span style="display:inline-block;transform:scaleX(0.9825);transform-origin:0 0">Einfaches Volume</span></div>
<div style="left:1px;top:854px;width:1139px;height:25px;background:#f0f0f0;"></div>
<div style="left:1px;top:854px;width:1139px;height:1px;background:#ffffff;"></div>
<div style="left:2px;top:855px;width:1137px;height:1px;background:#e3e3e3;"></div>
<div style="left:1px;top:854px;width:1px;height:25px;background:#f8f8f8;"></div>
<div style="left:1138px;top:855px;width:2px;height:24px;background:#f8f8f8;"></div>
<div style="left:919px;top:858px;width:1px;height:21px;background:#d9d9d9;"></div>
<div style="left:1052px;top:858px;width:1px;height:21px;background:#d9d9d9;"></div>
<div style="left:1137px;top:858px;width:1px;height:21px;background:#d9d9d9;"></div>
</body></html>
